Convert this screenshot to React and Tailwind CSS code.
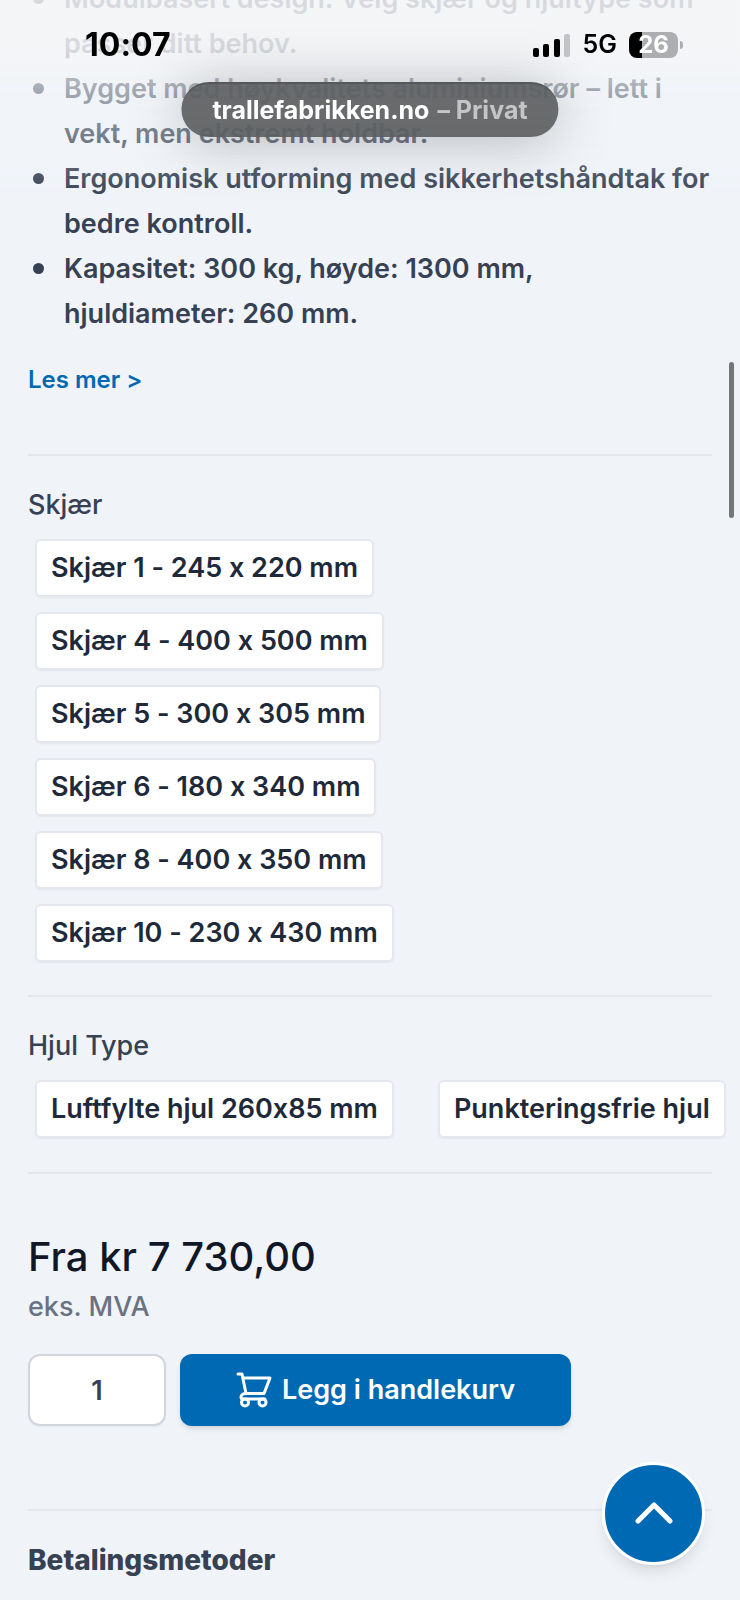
import { useState } from "react";

const features = [
  "Modulbasert design: Velg skjær og hjultype som passer ditt behov.",
  "Bygget med høykvalitets aluminiumsrør – lett i vekt, men ekstremt holdbar.",
  "Ergonomisk utforming med sikkerhetshåndtak for bedre kontroll.",
  "Kapasitet: 300 kg, høyde: 1300 mm,\nhjuldiameter: 260 mm.",
];

const blades = [
  "Skjær 1 - 245 x 220 mm",
  "Skjær 4 - 400 x 500 mm",
  "Skjær 5 - 300 x 305 mm",
  "Skjær 6 - 180 x 340 mm",
  "Skjær 8 - 400 x 350 mm",
  "Skjær 10 - 230 x 430 mm",
];

const wheels = ["Luftfylte hjul 260x85 mm", "Punkteringsfrie hjul"];

function OptionButton({ label, selected, onClick }) {
  return (
    <button
      type="button"
      aria-pressed={selected}
      onClick={onClick}
      className="h-[58px] shrink-0 whitespace-nowrap rounded-md border-2 border-[#e4e8ee] bg-white px-[14px] text-[27px] font-semibold text-gray-800 shadow-xs"
    >
      {label}
    </button>
  );
}

function CartIcon() {
  return (
    <svg
      viewBox="0 0 36 36"
      className="size-9"
      fill="none"
      stroke="currentColor"
      strokeWidth="3"
      strokeLinecap="round"
      strokeLinejoin="round"
      aria-hidden="true"
    >
      <path d="M2 2h4l4 19.500M7 6h27l-6 15.500H10c-3 0-5 1.500-5 3.500 0 1.500 1 2 2 2h22" />
      <circle cx="9" cy="30.500" r="3.500" />
      <circle cx="26.500" cy="30.500" r="3.500" />
    </svg>
  );
}

function StatusBar() {
  return (
    <div className="fixed inset-x-0 top-0 z-20 flex items-center justify-between pt-[25px] pr-[57px] pl-[85px] text-black">
      <span className="text-[32px] leading-[40px] font-bold">10:07</span>
      <div className="flex items-center">
        <svg viewBox="0 0 38 24" className="mr-3 h-6 w-[38px]" aria-hidden="true">
          <rect x="0" y="15" width="6" height="9" rx="2" />
          <rect x="10" y="11" width="6" height="13" rx="2" />
          <rect x="21" y="6" width="6" height="18" rx="2" />
          <rect x="31" y="1" width="6" height="23" rx="2" fill="#c3c4c7" />
        </svg>
        <span className="mr-3 text-[25px] font-semibold">5G</span>
        <div className="flex h-[26px] w-[49px] items-center justify-center rounded-lg bg-linear-to-r from-black from-27% to-[#adaeb1] to-27% text-2xl leading-[26px] font-bold text-white">
          26
        </div>
        <span className="ml-[2px] h-2 w-[3px] rounded-r-full bg-[#adaeb1]" />
      </div>
    </div>
  );
}

export default function App() {
  const [blade, setBlade] = useState(null);
  const [wheel, setWheel] = useState(null);
  const [quantity, setQuantity] = useState("1");

  return (
    <div className="min-h-screen overflow-hidden bg-[#f0f4f9] font-[Inter,sans-serif] text-gray-700 [font-feature-settings:'calt'_0]">
      <StatusBar />
      <div className="pointer-events-none fixed inset-x-0 top-0 z-10 h-[200px] bg-linear-to-b from-[#f4f5f7]/85 from-24% via-[#f2f4f7]/60 via-44% to-[#f0f4f9]/0" />
      <div className="fixed top-[82px] left-1/2 z-20 flex h-[55px] -translate-x-1/2 items-center gap-2 rounded-full border-t-2 border-[#55575a] bg-[#5c5e61]/92 px-[31px] text-[25px] font-bold whitespace-nowrap text-white shadow-[0_4px_56px_rgba(0,0,0,0.25)]">
        trallefabrikken.no <span className="text-[#c4c5c7]">– Privat</span>
      </div>
      <div className="fixed top-[362px] right-[6px] z-20 h-[156px] w-[5px] rounded-full bg-[#747678]" />

      <main className="px-7">
        <ul className="-mt-6 pl-[5px] text-[27px] leading-[45px] font-semibold whitespace-pre-line">
          {features.map((feature) => (
            <li key={feature} className="flex gap-5">
              <span className="mt-[17px] size-[11px] shrink-0 rounded-full bg-gray-700" />
              {feature}
            </li>
          ))}
        </ul>

        <a href="#beskrivelse" className="mt-[26px] inline-block text-2xl leading-[36px] font-semibold text-[#0069b4]">
          Les mer &gt;
        </a>

        <section className="mt-14 border-t-2 border-[#e4e7ec] pt-[29px] pb-[33px]">
          <h2 className="text-[27px] leading-[40px] font-medium">Skjær</h2>
          <div className="mt-[14px] flex flex-col items-start gap-[15px] pl-[7px]">
            {blades.map((label) => (
              <OptionButton key={label} label={label} selected={blade === label} onClick={() => setBlade(label)} />
            ))}
          </div>
        </section>

        <section className="border-t-2 border-[#e4e7ec] pt-[29px] pb-[34px]">
          <h2 className="text-[27px] leading-[40px] font-medium">Hjul Type</h2>
          <div className="mt-[14px] flex gap-11 pl-[7px]">
            {wheels.map((label) => (
              <OptionButton key={label} label={label} selected={wheel === label} onClick={() => setWheel(label)} />
            ))}
          </div>
        </section>

        <section className="border-t-2 border-[#e4e7ec] pt-[56px] pb-[83px]">
          <p className="text-[40px] leading-[54px] font-medium text-gray-900">Fra kr 7 730,00</p>
          <p className="text-[27px] leading-[45px] font-medium text-gray-500">eks. MVA</p>
          <div className="mt-[25px] flex gap-[14px]">
            <input
              type="text"
              inputMode="numeric"
              aria-label="Antall"
              value={quantity}
              onChange={(e) => setQuantity(e.target.value)}
              className="h-[72px] w-[138px] rounded-xl border-2 border-gray-300 bg-white text-center text-[27px] font-semibold shadow-xs"
            />
            <button
              type="button"
              className="flex h-[72px] w-[391px] items-center justify-center gap-[10px] rounded-xl bg-[#0069b4] text-[27px] font-semibold text-white shadow-md"
            >
              <CartIcon />
              Legg i handlekurv
            </button>
          </div>
        </section>

        <section className="border-t-2 border-[#e4e7ec] pt-[29px]">
          <h2 className="text-[28px] leading-[40px] font-extrabold">Betalingsmetoder</h2>
        </section>
      </main>

      <button
        type="button"
        aria-label="Til toppen"
        onClick={() => window.scrollTo({ top: 0 })}
        className="fixed right-[35px] bottom-[35px] z-20 flex size-[103px] items-center justify-center rounded-full border-3 border-white bg-[#0069b4] text-white shadow-lg"
      >
        <svg viewBox="0 0 38 24" className="h-6 w-[38px]" fill="none" stroke="currentColor" strokeWidth="5" strokeLinecap="round" strokeLinejoin="round" aria-hidden="true">
          <path d="M3 19 19 3l16 16" />
        </svg>
      </button>
    </div>
  );
}
